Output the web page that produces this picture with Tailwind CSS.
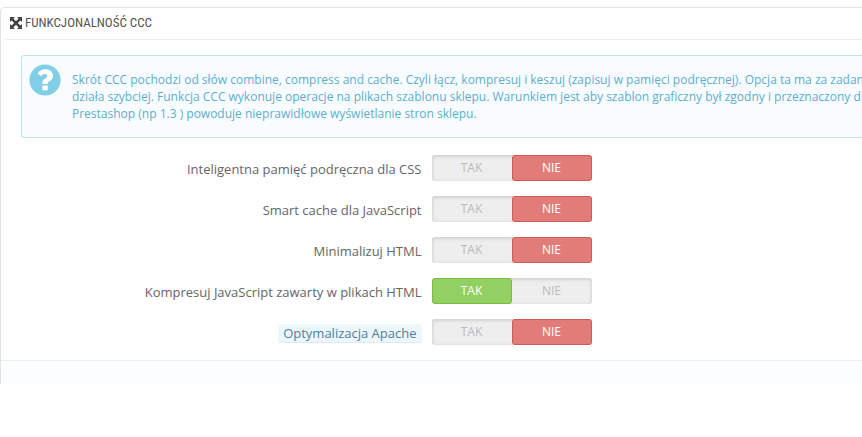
<!DOCTYPE html>
<html lang="pl">
<head>
<meta charset="utf-8">
<meta name="viewport" content="width=device-width, initial-scale=1">
<title>Funkcjonalność CCC</title>
<script src="https://cdn.jsdelivr.net/npm/@tailwindcss/browser@4"></script>
</head>
<body class="bg-white pt-[7px] font-['Open_Sans','Noto_Sans',sans-serif] text-[#666]">
<form class="overflow-hidden rounded-tl-[5px] border-t border-l border-[#e1e2e4]">
  <h3 class="ml-1 flex h-8 items-center gap-[3px] border-b border-[#eee] pb-[2px] pl-[5px] font-['Ubuntu_Condensed','Roboto_Condensed','Liberation_Sans_Narrow',sans-serif] text-[13px] font-normal text-[#555] uppercase">
    <svg class="size-3" viewBox="0 0 12 12" fill="#444" aria-hidden="true">
      <path d="M0 0h5L3.4 1.6 6 4.2l2.6-2.6L7 0h5v5l-1.6-1.6L7.8 6l2.6 2.6L12 7v5H7l1.6-1.6L6 7.8l-2.6 2.6L5 12H0V7l1.600 1.600L4.200 6 1.600 3.400 0 5z"/>
    </svg>
    Funkcjonalność CCC
  </h3>

  <div class="mt-[15px] ml-5 flex h-[83px] items-start overflow-hidden rounded-l-[3px] border-y border-l border-[#bfe6ee] bg-[#f8fcff] pl-[7px] text-[12px] leading-[17px] whitespace-nowrap text-[#5bafce]">
    <svg class="mt-2 size-8 shrink-0" viewBox="0 0 32 32" aria-hidden="true">
      <circle cx="16" cy="16" r="15.600" fill="#81cfe6"/>
      <path d="M8.600 9.800C10.200 7 12.800 5.300 16.200 5.300c4.400 0 7.800 2.600 7.800 6.500 0 2.700-1.400 4.200-3.400 5.500-1.500 1-1.900 1.400-1.900 2.700h-5.400v-.8c0-2.400 1.200-3.700 3-4.900 1.300-.8 1.900-1.300 1.900-2.300 0-1.200-1-1.900-2.400-1.900-1.500 0-2.500.8-3.500 2.200zM13.300 21.600h5.400v4.700h-5.400z" fill="#fff"/>
    </svg>
    <p class="mt-[15px] ml-[11px]">Skrót CCC pochodzi od słów combine, compress and cache. Czyli łącz, kompresuj i keszuj (zapisuj w pamięci podręcznej). Opcja ta ma za zadan<br>działa szybciej. Funkcja CCC wykonuje operacje na plikach szablonu sklepu. Warunkiem jest aby szablon graficzny był zgodny i przeznaczony d<br>Prestashop (np 1.3 ) powoduje nieprawidłowe wyświetlanie stron sklepu.</p>
  </div>

  <div class="flex flex-col gap-[14px] pt-[17px] pb-[14px] text-[13px]">
    <div class="flex h-[27px]" role="radiogroup" aria-labelledby="l1">
      <div class="flex w-1/2 items-center justify-end pt-[3px] pr-[10px]"><span id="l1">Inteligentna pamięć podręczna dla CSS</span></div>
      <div class="grid h-[26px] w-40 grid-cols-2 rounded-[3px] bg-[#eee] text-[12px] text-[#bbb] inset-shadow-[0_1px_3px_1px_#d2d2d2]">
        <label class="flex items-center justify-center rounded-[3px] border border-transparent has-checked:border-[#79bd3c] has-checked:bg-[#92d063] has-checked:text-white"><input class="sr-only" type="radio" name="css" value="1">TAK</label>
        <label class="flex items-center justify-center rounded-[3px] border border-transparent has-checked:border-[#cf5953] has-checked:bg-[#e27c79] has-checked:text-white"><input class="sr-only" type="radio" name="css" value="0" checked>NIE</label>
      </div>
    </div>
    <div class="flex h-[27px]" role="radiogroup" aria-labelledby="l2">
      <div class="flex w-1/2 items-center justify-end pt-[3px] pr-[10px]"><span id="l2">Smart cache dla JavaScript</span></div>
      <div class="grid h-[26px] w-40 grid-cols-2 rounded-[3px] bg-[#eee] text-[12px] text-[#bbb] inset-shadow-[0_1px_3px_1px_#d2d2d2]">
        <label class="flex items-center justify-center rounded-[3px] border border-transparent has-checked:border-[#79bd3c] has-checked:bg-[#92d063] has-checked:text-white"><input class="sr-only" type="radio" name="js" value="1">TAK</label>
        <label class="flex items-center justify-center rounded-[3px] border border-transparent has-checked:border-[#cf5953] has-checked:bg-[#e27c79] has-checked:text-white"><input class="sr-only" type="radio" name="js" value="0" checked>NIE</label>
      </div>
    </div>
    <div class="flex h-[27px]" role="radiogroup" aria-labelledby="l3">
      <div class="flex w-1/2 items-center justify-end pt-[3px] pr-[10px]"><span id="l3">Minimalizuj HTML</span></div>
      <div class="grid h-[26px] w-40 grid-cols-2 rounded-[3px] bg-[#eee] text-[12px] text-[#bbb] inset-shadow-[0_1px_3px_1px_#d2d2d2]">
        <label class="flex items-center justify-center rounded-[3px] border border-transparent has-checked:border-[#79bd3c] has-checked:bg-[#92d063] has-checked:text-white"><input class="sr-only" type="radio" name="html" value="1">TAK</label>
        <label class="flex items-center justify-center rounded-[3px] border border-transparent has-checked:border-[#cf5953] has-checked:bg-[#e27c79] has-checked:text-white"><input class="sr-only" type="radio" name="html" value="0" checked>NIE</label>
      </div>
    </div>
    <div class="flex h-[27px]" role="radiogroup" aria-labelledby="l4">
      <div class="flex w-1/2 items-center justify-end pt-[3px] pr-[10px]"><span id="l4">Kompresuj JavaScript zawarty w plikach HTML</span></div>
      <div class="grid h-[26px] w-40 grid-cols-2 rounded-[3px] bg-[#eee] text-[12px] text-[#bbb] inset-shadow-[0_1px_3px_1px_#d2d2d2]">
        <label class="flex items-center justify-center rounded-[3px] border border-transparent has-checked:border-[#79bd3c] has-checked:bg-[#92d063] has-checked:text-white"><input class="sr-only" type="radio" name="inline" value="1" checked>TAK</label>
        <label class="flex items-center justify-center rounded-[3px] border border-transparent has-checked:border-[#cf5953] has-checked:bg-[#e27c79] has-checked:text-white"><input class="sr-only" type="radio" name="inline" value="0">NIE</label>
      </div>
    </div>
    <div class="flex h-[27px]" role="radiogroup" aria-labelledby="l5">
      <div class="flex w-1/2 items-center justify-end pt-[2px] pr-[10px]"><span id="l5" class="rounded-[3px] border-b border-[#dcebf3] bg-[#edf7fb] px-[5px] leading-[18px] text-[#4b7f9f]">Optymalizacja Apache</span></div>
      <div class="grid h-[26px] w-40 grid-cols-2 rounded-[3px] bg-[#eee] text-[12px] text-[#bbb] inset-shadow-[0_1px_3px_1px_#d2d2d2]">
        <label class="flex items-center justify-center rounded-[3px] border border-transparent has-checked:border-[#79bd3c] has-checked:bg-[#92d063] has-checked:text-white"><input class="sr-only" type="radio" name="apache" value="1">TAK</label>
        <label class="flex items-center justify-center rounded-[3px] border border-transparent has-checked:border-[#cf5953] has-checked:bg-[#e27c79] has-checked:text-white"><input class="sr-only" type="radio" name="apache" value="0" checked>NIE</label>
      </div>
    </div>
  </div>

  <div class="h-6 border-t border-[#eee] bg-[#fcfdfe]"></div>
</form>
</body>
</html>
